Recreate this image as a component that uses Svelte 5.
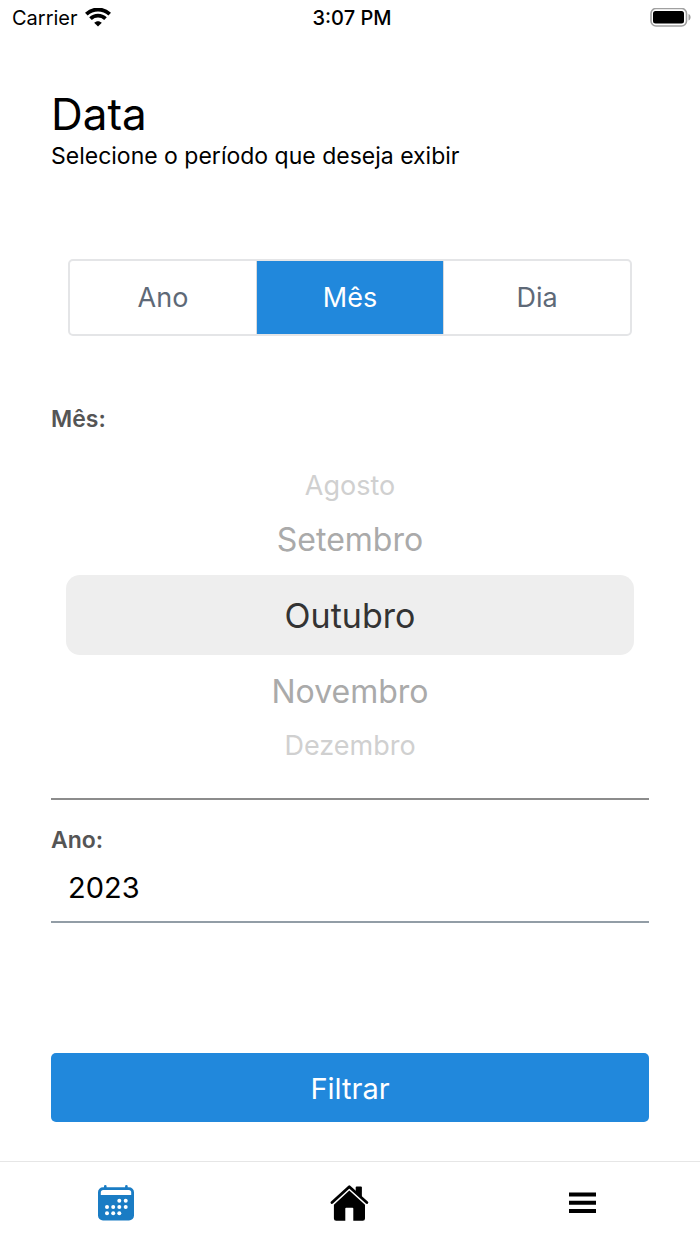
<script>
    const periods = ['Ano', 'Mês', 'Dia'];
    const months = [
        'Janeiro', 'Fevereiro', 'Março', 'Abril', 'Maio', 'Junho',
        'Julho', 'Agosto', 'Setembro', 'Outubro', 'Novembro', 'Dezembro'
    ];

    let period = 'Mês';
    let month = 9;
    let year = '2023';

    // dots of the calendar icon: [x, y]
    const dots = [
        [21.3, 15.7], [27.7, 15.7],
        [9, 22], [15.2, 22], [21.3, 22], [27.7, 22],
        [9, 28.3], [15.2, 28.3], [21.3, 28.3]
    ];

    // two months on each side of the selected one
    $: visible = [-2, -1, 0, 1, 2]
        .map((offset) => ({ offset, index: month + offset }))
        .filter((item) => months[item.index]);
</script>

<div class="screen">
    <header class="status">
        <div class="carrier">
            <span>Carrier</span>
            <svg width="26" height="20" viewBox="0 0 26 20" aria-hidden="true">
                <g fill="none" stroke="#000" stroke-width="3.8">
                    <path d="M1.300 6.200C8-.1 18-.1 24.700 6.200" />
                    <path d="M5.500 10.700c4.300-4 10.700-4 15 0" />
                </g>
                <path d="M13 18.600 9.200 14.800c2.200-2.100 5.400-2.100 7.600 0z" />
            </svg>
        </div>
        <span class="time">3:07 PM</span>
        <svg class="battery" width="42" height="20" viewBox="0 0 42 20" aria-hidden="true">
            <rect x="1" y="0.500" width="35.500" height="17.500" rx="5" fill="none" stroke="#a0a0a0" stroke-width="1.600" />
            <rect x="3" y="3" width="31" height="12.500" rx="2.500" />
            <path d="M38.500 6c2.800 1 2.800 5.500 0 6.500z" fill="#a0a0a0" />
        </svg>
    </header>

    <main>
        <h1>Data</h1>
        <p class="subtitle">Selecione o período que deseja exibir</p>

        <div class="segments">
            {#each periods as name}
                <button type="button" class:active={period === name} aria-pressed={period === name} on:click={() => (period = name)}>{name}</button>
            {/each}
        </div>

        <fieldset class="field">
            <legend>Mês:</legend>
            <div class="picker">
                {#each visible as item (item.index)}
                    <label class="month" class:near={Math.abs(item.offset) === 1} class:far={Math.abs(item.offset) === 2}>
                        <input type="radio" name="month" value={item.index} bind:group={month} />
                        {months[item.index]}
                    </label>
                {/each}
            </div>
        </fieldset>

        <div class="field year">
            <label for="year">Ano:</label>
            <input id="year" type="text" inputmode="numeric" bind:value={year} />
        </div>

        <button type="button" class="submit">Filtrar</button>
    </main>

    <nav>
        <a href="#data" aria-label="Data">
            <svg width="38" height="36" viewBox="0 0 38 36">
                <path fill="#1a7cc4" d="M6 2.300V1.300a1.300 1.300 0 0 1 2.600 0v1h18.500v-1a1.300 1.300 0 0 1 2.600 0v1H31a5 5 0 0 1 5 5v23.200a5 5 0 0 1-5 5H5a5 5 0 0 1-5-5V7.300a5 5 0 0 1 5-5z" />
                <path fill="#fff" d="M2.800 10V7.500A2.500 2.500 0 0 1 5.300 5h25.400a2.500 2.500 0 0 1 2.500 2.500V10z" />
                {#each dots as [x, y]}
                    <circle cx={x} cy={y} r="2" fill="#fff" />
                {/each}
            </svg>
        </a>
        <a href="#inicio" aria-label="Início">
            <svg width="40" height="36" viewBox="0 0 40 36">
                <path d="M25.700 2.500a1 1 0 0 1 1-1h4.200a1 1 0 0 1 1 1V13l-6.200-5.800z" />
                <path fill="none" stroke="#fff" stroke-width="2" d="M3 19.500 19.300 4.300l16.300 15.200" />
                <path d="M19.300 5.400 35 19.800v13.700a2.300 2.300 0 0 1-2.300 2.300h-9.400V23.500a.8.800 0 0 0-.8-.8h-6.400a.8.800 0 0 0-.8.800v12.300H6.200a2.300 2.300 0 0 1-2.300-2.300V19.800z" />
                <path fill="none" stroke="#000" stroke-width="2.800" stroke-linecap="round" stroke-linejoin="round" d="M2 17.500 19.300 1.700l17.500 15.800" />
            </svg>
        </a>
        <a href="#menu" aria-label="Menu">
            <svg width="28" height="22" viewBox="0 0 28 22">
                <path d="M0 0.500h27v4H0zM0 8.700h27v4H0zM0 17h27v4H0z" />
            </svg>
        </a>
    </nav>
</div>

<style>
    :global(body) {
        margin: 0;
        background: #fff;
    }

    .screen {
        --blue: #2188dc;
        --gutter: 51px;
        display: flex;
        flex-direction: column;
        min-height: 100vh;
        color: #000;
        font-family: Inter, "Liberation Sans", sans-serif;
    }

    button, input {
        font: inherit;
        box-sizing: border-box;
    }

    .status {
        display: grid;
        grid-template-columns: 1fr auto 1fr;
        align-items: center;
        height: 36px;
        padding: 0 8px 0 12px;
        font-size: 20px;
    }

    .carrier {
        display: flex;
        align-items: center;
        gap: 7px;
    }

    .time {
        font-weight: 500;
    }

    .battery {
        justify-self: end;
    }

    main {
        flex: 1;
        display: flex;
        flex-direction: column;
        padding: 52px var(--gutter) 39px;
    }

    h1 {
        margin: 0;
        font-size: 44px;
        font-weight: 400;
        line-height: 52px;
    }

    .subtitle {
        margin: 0;
        font-size: 23px;
        line-height: 32px;
    }

    .segments {
        display: flex;
        margin: 87px 17px 0;
        border: 2px solid #e4e5e7;
        border-radius: 5px;
    }

    .segments button {
        flex: 1;
        height: 73px;
        padding: 0;
        border: 0;
        background: none;
        color: #5e6977;
        font-size: 27px;
    }

    .segments button + button {
        border-left: 1px solid #d8dadc;
    }

    .segments button.active {
        background: var(--blue);
        color: #fff;
    }

    .field {
        margin: 0;
        padding: 0;
        border: 0;
        border-bottom: 2px solid #8c8c8c;
    }

    fieldset.field {
        margin-top: 67px;
        padding-bottom: 35px;
    }

    legend, .year label {
        padding: 0;
        color: #555;
        font-size: 23px;
        font-weight: 600;
        line-height: 32px;
    }

    .picker {
        display: flex;
        flex-direction: column;
        margin: 32px 15px 0;
    }

    .month {
        display: flex;
        align-items: center;
        justify-content: center;
        height: 80px;
        border-radius: 14px;
        background: #eee;
        color: #333;
        font-size: 34px;
    }

    .month.near {
        height: 72px;
        background: none;
        color: #aaa;
        font-size: 32px;
    }

    .month.far {
        height: 36px;
        background: none;
        color: #d0d0d0;
        font-size: 27px;
    }

    .month input {
        appearance: none;
        width: 0;
        height: 0;
        margin: 0;
    }

    .year {
        display: flex;
        flex-direction: column;
        padding-top: 24px;
        border-bottom-color: #929da6;
    }

    .year input {
        width: 100%;
        height: 65px;
        padding: 0 17px 2px;
        border: 0;
        background: none;
        color: #000;
        font-size: 29px;
    }

    .submit {
        height: 69px;
        margin-top: auto;
        padding: 2px 0 0;
        border: 0;
        border-radius: 5px;
        background: var(--blue);
        color: #fff;
        font-size: 29px;
    }

    nav {
        display: flex;
        height: 82px;
        border-top: 1px solid #e6e6e6;
    }

    nav a {
        flex: 1;
        display: flex;
        align-items: center;
        justify-content: center;
        color: #000;
    }
</style>
